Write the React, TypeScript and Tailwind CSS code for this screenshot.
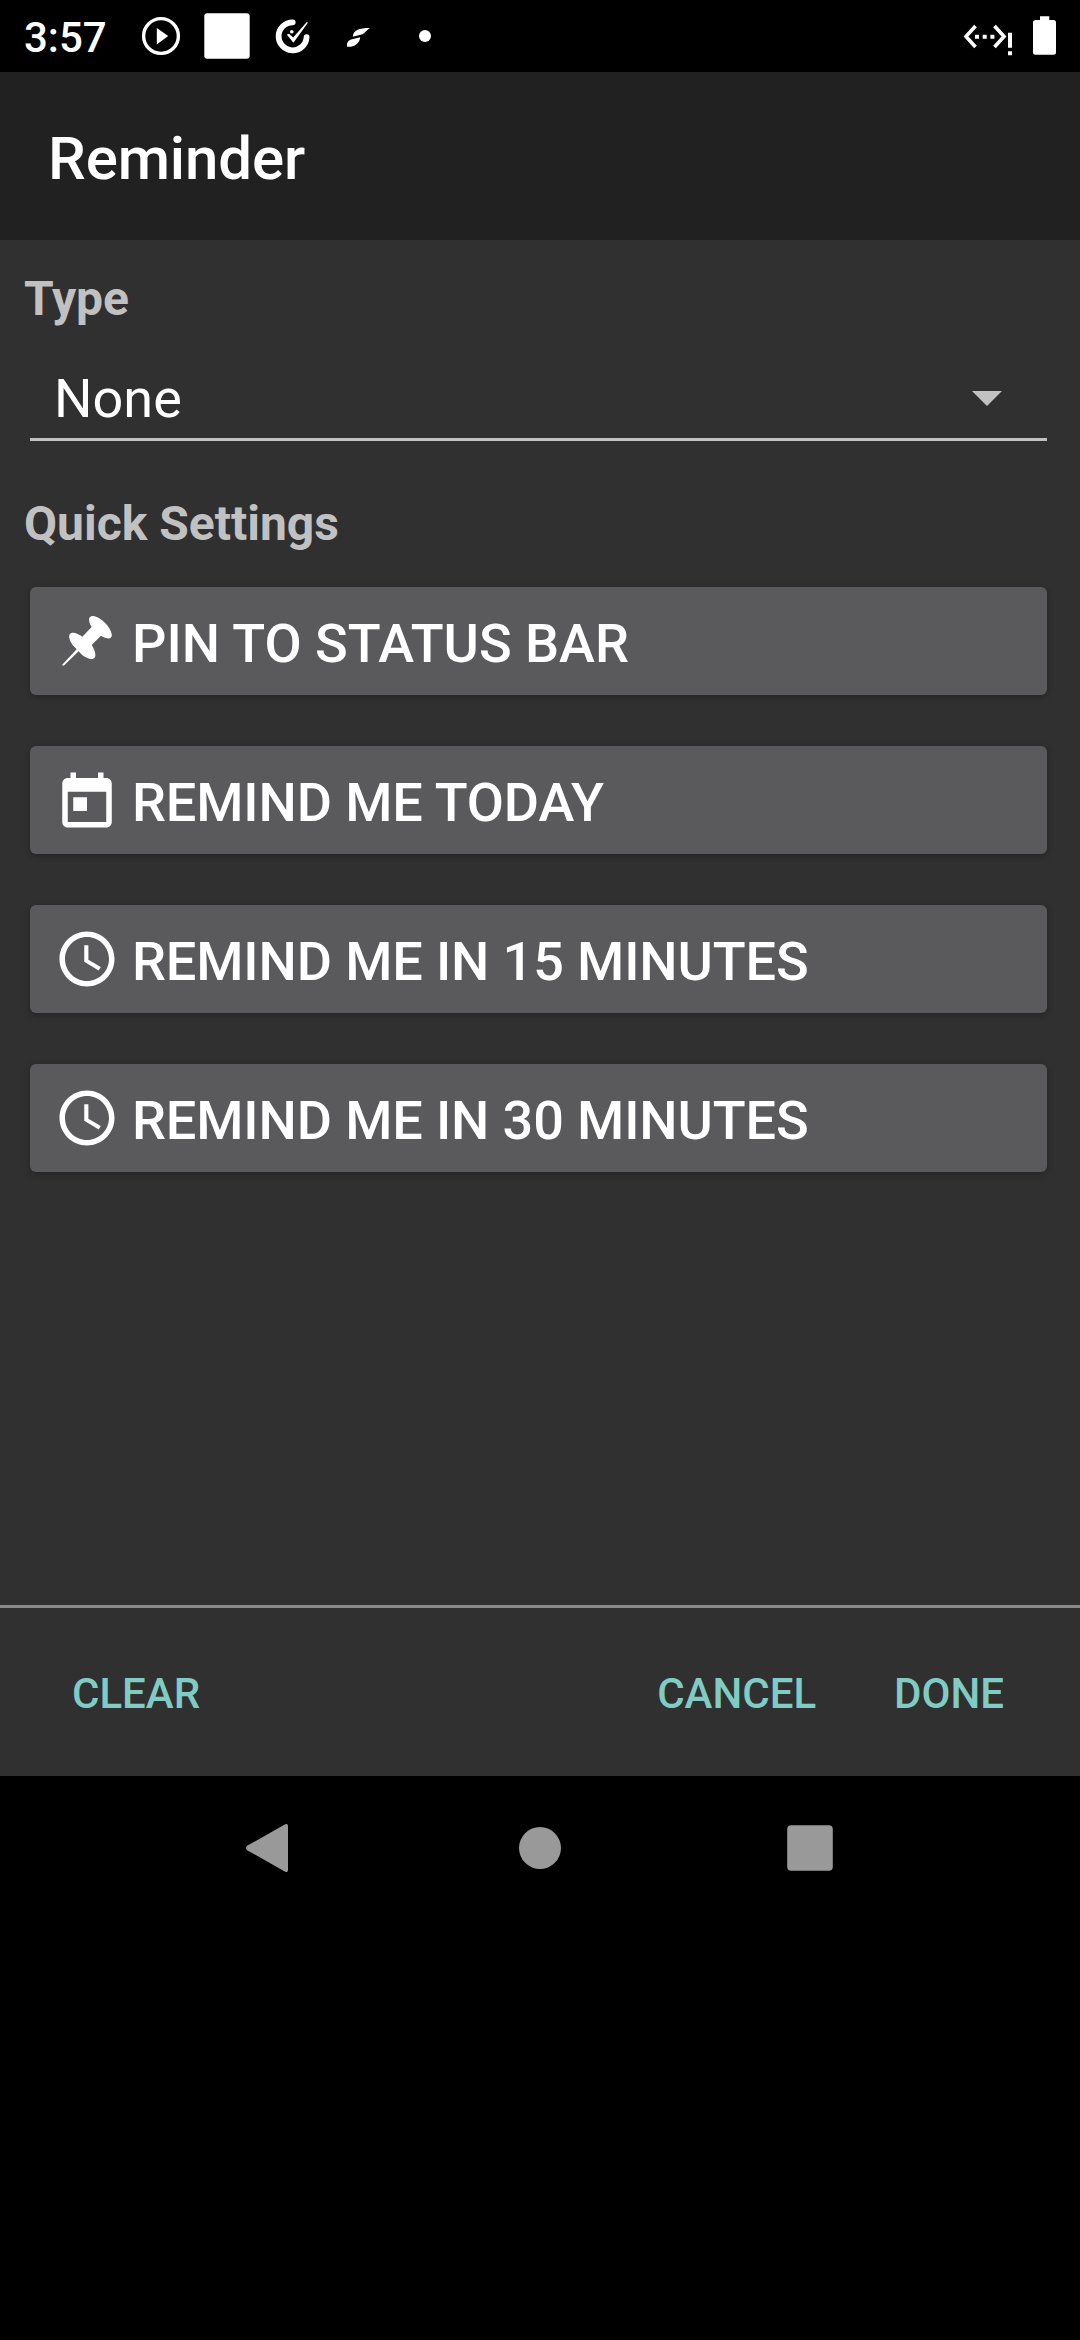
import React from "react";

function PinIcon() {
  return (
    <svg className="size-[66px] shrink-0" viewBox="102 84 198 198" fill="currentColor">
      <path d="M207 120C206 112 213 106 224 109C245 114 270 140 275 162C277 172 270 177 262 175C256 174 250 171 243 167L215 195C222 205 227 218 226 228C224 238 213 239 204 235C195 232 186 226 176 214L131 257L126 255L170 208C158 197 150 186 148 174C146 162 152 157 161 158C170 159 179 164 187 170L215 141C210 134 208 127 207 120Z" />
    </svg>
  );
}

function TodayIcon() {
  return (
    <svg className="size-[66px] shrink-0" viewBox="0 -1 24 24" fill="currentColor">
      <path d="M19 3h-1V1h-2v2H8V1H6v2H5c-1.11 0-1.99.9-1.99 2L3 19c0 1.1.89 2 2 2h14c1.1 0 2-.9 2-2V5c0-1.1-.9-2-2-2zm0 16H5V8h14v11zM7 10h5v5H7z" />
    </svg>
  );
}

function ClockIcon() {
  return (
    <svg className="size-[66px] shrink-0" viewBox="0 0 24 24" fill="currentColor">
      <path d="M11.99 2C6.47 2 2 6.48 2 12s4.47 10 9.99 10C17.52 22 22 17.52 22 12S17.52 2 11.99 2zM12 20c-4.42 0-8-3.58-8-8s3.58-8 8-8 8 3.58 8 8-3.58 8-8 8z" />
      <path d="M12.5 7H11v6l5.25 3.15.75-1.23-4.5-2.67z" />
    </svg>
  );
}

function StatusBar() {
  return (
    <div className="flex h-[72px] items-center bg-black pl-6 pr-[23px] text-white">
      <span className="w-[107px] pt-[4px] text-[42px] leading-[50px] font-medium">3:57</span>
      <svg className="h-[72px] w-[310px]" viewBox="131 0 310 72" fill="currentColor">
        <circle cx="161" cy="36" r="17.4" fill="none" stroke="currentColor" strokeWidth="3.4" />
        <path d="M156.8 28v16.4L168.2 36z" />
        <rect x="204.3" y="13.3" width="45.4" height="45.4" rx="3" />
        <path
          d="M292.700 22.300A14 14 0 1 0 306.600 37.200"
          fill="none"
          stroke="currentColor"
          strokeWidth="5.800"
          strokeLinecap="round"
        />
        <path d="M286.800 34.600l2.300-.9 4.100 3.700 13.600-15.400 1.100.8L293.400 42.800z" />
        <circle cx="291.800" cy="31.800" r="1.800" />
        <path d="M370.200 28C361 27.800 353 29.500 352.800 36.700L362.500 34.200C366 32.600 366 30.200 370.200 28zM360.200 37.300L351 39.500C347.500 41 346.300 43.500 347.200 46.800C354 47.300 359.500 44 360.200 37.300z" />
        <circle cx="425" cy="36" r="6" />
      </svg>
      <svg className="ml-auto h-[72px] w-[97px]" viewBox="960 0 97 72" fill="currentColor">
        <path d="M975.500 26L966 36.500L975.500 47M994.500 26L1004 36.500L994.500 47" fill="none" stroke="currentColor" strokeWidth="3.600" />
        <path d="M975 34.700h4v4h-4zM982.700 34.700h4v4h-4zM990.400 34.700h4v4h-4zM1008 32.700h4v15h-4zM1008 51.300h4v4h-4z" />
        <path d="M1040 16.300h9.300v3.700h4.200a2.500 2.500 0 0 1 2.500 2.500v29.700a2.500 2.500 0 0 1-2.500 2.500h-18a2.500 2.500 0 0 1-2.500-2.500V22.500a2.500 2.500 0 0 1 2.500-2.500h4.500z" />
      </svg>
    </div>
  );
}

function QuickButton({ icon, children }: { icon: React.ReactNode; children: React.ReactNode }) {
  return (
    <button className="flex h-[108px] w-full items-center gap-3 rounded-[6px] bg-[#5a5a5c] pl-6 text-white shadow-[0_2px_6px_rgba(0,0,0,0.25)]">
      {icon}
      <span className="pt-[5px] text-[54px] leading-[64px] font-medium whitespace-nowrap">{children}</span>
    </button>
  );
}

function NavBar() {
  return (
    <nav className="flex h-36 items-center justify-center gap-[180px] text-[#999999]">
      <svg className="size-[90px]" viewBox="0 0 90 90" fill="currentColor">
        <path d="M22.500 42.600L60.200 21.300Q63 20 63 23V67Q63 70 60.200 68.700L22.500 47.400Q19.500 45 22.500 42.600z" />
      </svg>
      <svg className="size-[90px]" viewBox="0 0 90 90" fill="currentColor">
        <circle cx="45" cy="45" r="21" />
      </svg>
      <svg className="size-[90px]" viewBox="0 0 90 90" fill="currentColor">
        <rect x="22.200" y="22.200" width="45.600" height="45.600" rx="4" />
      </svg>
    </nav>
  );
}

export default function App() {
  return (
    <div className="flex h-[2340px] w-[1080px] flex-col bg-black font-['Roboto',sans-serif]">
      <StatusBar />
      <header className="flex h-[168px] items-center bg-[#212121] pl-12">
        <h1 className="pt-1.5 text-[60px] leading-[70px] font-medium tracking-[-0.1px] text-white">Reminder</h1>
      </header>
      <main className="flex h-[1365px] flex-col bg-[#303030] pt-[31px]">
        <h2 className="pl-6 text-[48px] leading-[56px] font-bold text-[#c1c1c1]">Type</h2>
        <div className="mt-[35px] mr-[33px] ml-[30px] flex h-[79px] items-center justify-between border-b-[3px] border-[#c1c1c1] pr-[45px] pb-[2px] pl-6">
          <span className="text-[54px] leading-[64px] text-white">None</span>
          <svg className="mb-px h-[15px] w-[30px]" viewBox="0 0 30 15" fill="#c1c1c1">
            <path d="M0 0h30L15 15z" />
          </svg>
        </div>
        <h2 className="mt-[55px] pl-6 text-[48px] leading-[56px] font-bold text-[#c1c1c1]">Quick Settings</h2>
        <div className="mt-[35px] mr-[33px] ml-[30px] flex flex-col gap-[51px]">
          <QuickButton icon={<PinIcon />}>PIN TO STATUS BAR</QuickButton>
          <QuickButton icon={<TodayIcon />}>
            <span className="tracking-[-0.12px]">REMIND ME TODAY</span>
          </QuickButton>
          <QuickButton icon={<ClockIcon />}>
            <span className="tracking-[-0.12px]">REMIND ME IN 15 MINUTES</span>
          </QuickButton>
          <QuickButton icon={<ClockIcon />}>
            <span className="tracking-[-0.12px]">REMIND ME IN 30 MINUTES</span>
          </QuickButton>
        </div>
      </main>
      <footer className="flex h-[171px] items-center border-t-[3px] border-[#8a8a8a] bg-[#303030] pr-[76px] pl-[72px] text-[42px] leading-[50px] font-medium text-[#80cbc4]">
        <button className="mt-[3px]">CLEAR</button>
        <button className="mt-[3px] ml-auto">CANCEL</button>
        <button className="mt-[3px] ml-[78px]">DONE</button>
      </footer>
      <NavBar />
    </div>
  );
}
